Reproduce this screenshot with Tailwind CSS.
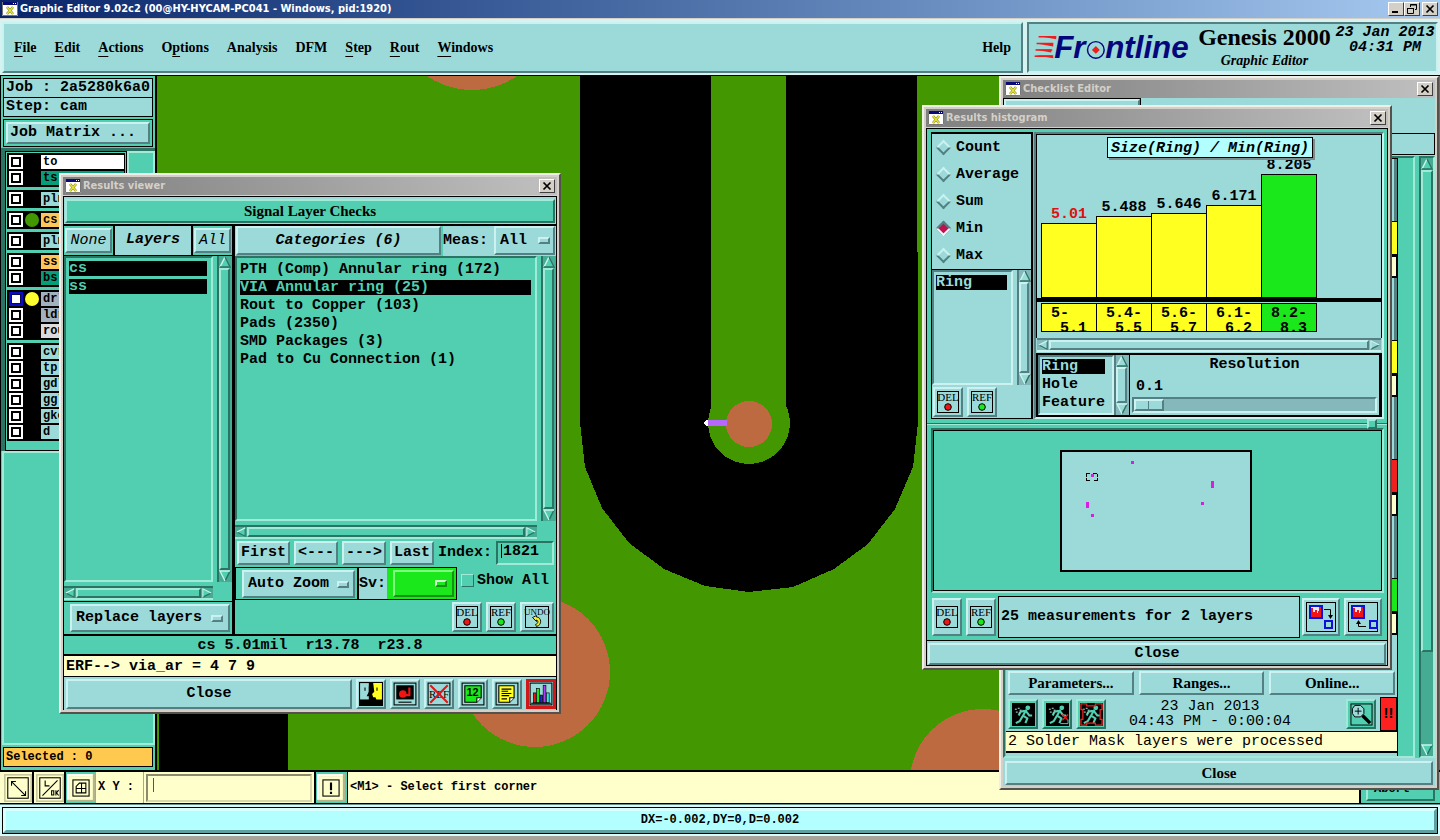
<!DOCTYPE html>
<html lang="en">
<head>
  <meta charset="UTF-8" />
  <meta name="viewport" content="width=device-width, initial-scale=1" />
  <title>Graphic Editor 9.02c2</title>
  <script src="https://cdn.jsdelivr.net/npm/@tailwindcss/browser@4"></script>
</head>
<body class="relative h-screen overflow-hidden flex flex-col bg-[#52ceb0] text-black text-[15px] leading-[18px] font-bold font-['Liberation_Mono',monospace]">

  <!-- Shared icons -->
  <svg class="hidden">
    <symbol id="xwin" viewBox="0 0 16 14">
      <rect width="16" height="14" fill="#fff" />
      <rect width="16" height="3" fill="#0a0a78" />
      <path d="M11 1.5h1M13 1.5h1" stroke="#fff" />
      <path d="M5 5l6 7M11 5l-6 7" stroke="#8a8a10" stroke-width="2.6" />
      <path d="M5 5l6 7M11 5l-6 7" stroke="#e8e840" stroke-width="1.2" />
      <path d="M.5 0v13.500h15V0" fill="none" stroke="#777" />
    </symbol>
    <symbol id="close" viewBox="0 0 14 12">
      <path d="M3.500 2.500l7 7M10.500 2.500l-7 7" stroke="#000" stroke-width="1.7" />
    </symbol>
    <symbol id="up" viewBox="0 0 12 12">
      <path d="M6 1L11 11H1z" fill="currentColor" />
      <path d="M1 11L6 1" stroke="#c8f5ee" stroke-width="1.500" />
      <path d="M6 1l5 10H1" fill="none" stroke="#2b7362" stroke-width="1.300" />
    </symbol>
    <symbol id="down" viewBox="0 0 12 12">
      <path d="M1 1h10L6 11z" fill="currentColor" />
      <path d="M11 1L6 11" stroke="#2b7362" stroke-width="1.500" />
      <path d="M6 11L1 1h10" fill="none" stroke="#c8f5ee" stroke-width="1.300" />
    </symbol>
    <symbol id="left" viewBox="0 0 12 12">
      <path d="M1 6L11 1v10z" fill="currentColor" />
      <path d="M11 1v10L1 6" fill="none" stroke="#2b7362" stroke-width="1.300" />
      <path d="M1 6l10-5" stroke="#c8f5ee" stroke-width="1.500" />
    </symbol>
    <symbol id="right" viewBox="0 0 12 12">
      <path d="M1 1l10 5L1 11z" fill="currentColor" />
      <path d="M11 6L1 11" stroke="#2b7362" stroke-width="1.500" />
      <path d="M1 11V1l10 5" fill="none" stroke="#c8f5ee" stroke-width="1.300" />
    </symbol>
    <symbol id="del" viewBox="0 0 24 24">
      <rect x="1.500" y="1.500" width="21" height="21" fill="none" stroke="#000" />
      <text x="12" y="10.500" text-anchor="middle" font-family="Liberation Serif" font-size="11" font-weight="400">DEL</text>
      <circle cx="12" cy="17" r="3.300" fill="#f01414" stroke="#000" />
    </symbol>
    <symbol id="ref" viewBox="0 0 24 24">
      <rect x="1.500" y="1.500" width="21" height="21" fill="none" stroke="#000" />
      <text x="12" y="10.500" text-anchor="middle" font-family="Liberation Serif" font-size="11" font-weight="400">REF</text>
      <circle cx="12" cy="17" r="3.300" fill="#1be81b" stroke="#000" />
    </symbol>
    <symbol id="runner" viewBox="0 0 24 24">
      <circle cx="16.500" cy="5" r="2.500" fill="#52ceb0" />
      <path d="M15 7l-4 7M11 8l4 1 3 4h3M14 8l-5 1-2 4M11 13l5 3-2 5M11 14l-3 5-4 2" fill="none" stroke="#52ceb0" stroke-width="2.200" />
      <path d="M3 6.500h2M6 5.500h2M4 9.500h2M8 7.500h2M7 10.500h1" stroke="#b8efe2" />
    </symbol>
  </svg>

  <!-- Main title bar -->
  <header class="h-[18px] shrink-0 flex items-center gap-[2px] pl-[2px] pr-[2px] bg-linear-to-r from-[#0a246a] to-[#a6caf0] text-white text-[11px] font-['DejaVu_Sans_Condensed','DejaVu_Sans',sans-serif]">
    <svg class="w-4 h-[14px]"><use href="#xwin" /></svg>
    <h1 class="flex-1">Graphic Editor 9.02c2 (00@HY-HYCAM-PC041 - Windows, pid:1920)</h1>
    <button aria-label="Minimize" class="w-4 h-[14px] bg-[#d4d0c8] border [border-color:#fff_#404040_#404040_#fff]"><svg viewBox="0 0 14 12" class="block"><path d="M3 9h6" stroke="#000" stroke-width="2" /></svg></button>
    <button aria-label="Restore" class="w-4 h-[14px] -ml-[2px] bg-[#d4d0c8] border [border-color:#fff_#404040_#404040_#fff]"><svg viewBox="0 0 14 12" class="block"><path d="M5.500 4V1.500h6v5H10M5 2h7M2.500 5.500h6v5h-6zM2 5.500h7" fill="none" stroke="#000" /></svg></button>
    <button aria-label="Close" class="w-4 h-[14px] bg-[#d4d0c8] border [border-color:#fff_#404040_#404040_#fff]"><svg viewBox="0 0 14 12" class="block"><use href="#close" /></svg></button>
  </header>

  <div class="h-[58px] shrink-0 flex gap-1 pt-[3px] pb-[2px] px-[2px] bg-[#d5f3f1] border-t border-[#d4d0c8] border-b border-b-black">
    <nav class="flex-1 flex items-center px-[10px] gap-[18px] bg-[#9cdada] border-2 [border-color:#cbf1f1_#548083_#548083_#cbf1f1] text-[14px] font-['Liberation_Serif',serif]">
      <a href="#"><u class="underline-offset-4">F</u>ile</a>
      <a href="#"><u class="underline-offset-4">E</u>dit</a>
      <a href="#"><u class="underline-offset-4">A</u>ctions</a>
      <a href="#">O<u class="underline-offset-4">p</u>tions</a>
      <a href="#">Analysis</a>
      <a href="#">DFM</a>
      <a href="#"><u class="underline-offset-4">S</u>tep</a>
      <a href="#"><u class="underline-offset-4">R</u>out</a>
      <a href="#"><u class="underline-offset-4">W</u>indows</a>
      <a href="#" class="ml-auto">Help</a>
    </nav>
    <div class="w-[411px] shrink-0 flex bg-[#9cdada] border-2 [border-color:#548083_#cbf1f1_#cbf1f1_#548083]">
      <svg class="w-[166px] h-full shrink-0" viewBox="1029 23 166 48">
        <path d="M1038 35.500h17v3zM1035 43h17v3zM1033 49h17v3zM1033 55h19v3z" fill="#f01c1c" />
        <path d="M1037 36h18M1035 43h17M1034 49.500h17M1033 56h18" stroke="#f01c1c" stroke-width="1.500" />
        <g fill="#06067c" font-family="Liberation Sans" font-size="32" font-weight="700" font-style="italic">
          <text x="1053" y="58">Fr</text>
          <text x="1105" y="58">ntline</text>
        </g>
        <circle cx="1095.500" cy="49.500" r="8.500" fill="none" stroke="#06067c" stroke-width="1.500" />
        <path d="M1095.500 45.500l4 4-4 4-4-4z" fill="#f01c1c" />
      </svg>
      <div class="flex-1 text-center font-['Liberation_Serif',serif]">
        <div class="text-[24px] leading-[26px] whitespace-nowrap">Genesis 2000</div>
        <div class="text-[14px] leading-[22px] italic">Graphic Editor</div>
      </div>
      <div class="w-[102px] shrink-0 text-center italic leading-[15px] pt-px">23 Jan 2013<br />04:31 PM</div>
    </div>
  </div>

  <main class="flex-1 min-h-0 flex">
    <!-- Layer panel -->
    <aside class="w-[157px] shrink-0 flex flex-col border-r-2 border-black bg-[#52ceb0] border-l border-l-black">
      <div class="flex flex-col px-[2px] pt-[2px]">
        <div class="h-[20px] border border-black bg-[#9cdada] px-[2px] whitespace-nowrap">Job : 2a5280k6a0</div>
        <div class="h-[19px] border border-t-0 border-black bg-[#9cdada] px-[2px]">Step: cam</div>
        <div class="mt-[2px] h-[28px] border border-black p-[2px]">
          <button class="block w-full h-[22px] text-left leading-[16px] px-[2px] bg-[#9cdada] border-2 [border-color:#cbf1f1_#548083_#548083_#cbf1f1]">Job Matrix ...</button>
        </div>
      </div>
      <div class="mt-px h-[303px] flex pt-[3px] pl-1 bg-[#2b7362]">
        <div class="w-[122px] h-full flex flex-col gap-[3px] p-px bg-[#52ceb0] border border-black text-[12px] leading-[14px]">
          <div class="bg-black py-px pl-[2px]">
            <label class="flex items-center h-4"><input type="checkbox" class="appearance-none w-[14px] h-[14px] bg-white border-2 border-white outline-2 outline-black -outline-offset-4" /><span class="w-[18px]"></span><span class="flex-1 h-[14px] mr-px bg-white pl-[2px]">to</span></label>
            <label class="flex items-center h-4"><input type="checkbox" class="appearance-none w-[14px] h-[14px] bg-white border-2 border-white outline-2 outline-black -outline-offset-4" /><span class="w-[18px]"></span><span class="flex-1 h-[14px] mr-px bg-[#079d78] pl-[2px]">ts</span></label>
          </div>
          <div class="bg-black py-px pl-[2px]">
            <label class="flex items-center h-4"><input type="checkbox" class="appearance-none w-[14px] h-[14px] bg-white border-2 border-white outline-2 outline-black -outline-offset-4" /><span class="w-[18px]"></span><span class="flex-1 h-[14px] mr-px bg-[#9cdada] pl-[2px]">pln</span></label>
          </div>
          <div class="bg-black py-px pl-[2px]">
            <label class="flex items-center h-4"><input type="checkbox" class="appearance-none w-[14px] h-[14px] bg-white border-2 border-white outline-2 outline-black -outline-offset-4" /><span class="w-[14px] h-[14px] mx-[2px] rounded-full bg-[#439700]"></span><span class="flex-1 h-[14px] mr-px bg-[#ffc65a] pl-[2px]">cs</span></label>
          </div>
          <div class="bg-black py-px pl-[2px]">
            <label class="flex items-center h-4"><input type="checkbox" class="appearance-none w-[14px] h-[14px] bg-white border-2 border-white outline-2 outline-black -outline-offset-4" /><span class="w-[18px]"></span><span class="flex-1 h-[14px] mr-px bg-[#9cdada] pl-[2px]">pln</span></label>
          </div>
          <div class="bg-black py-px pl-[2px]">
            <label class="flex items-center h-4"><input type="checkbox" class="appearance-none w-[14px] h-[14px] bg-white border-2 border-white outline-2 outline-black -outline-offset-4" /><span class="w-[18px]"></span><span class="flex-1 h-[14px] mr-px bg-[#ffc65a] pl-[2px]">ss</span></label>
            <label class="flex items-center h-4"><input type="checkbox" class="appearance-none w-[14px] h-[14px] bg-white border-2 border-white outline-2 outline-black -outline-offset-4" /><span class="w-[18px]"></span><span class="flex-1 h-[14px] mr-px bg-[#079d78] pl-[2px]">bs</span></label>
          </div>
          <div class="bg-black py-px pl-[2px]">
            <label class="flex items-center h-4"><input type="checkbox" checked class="appearance-none w-[14px] h-[14px] bg-white border-3 border-[#0a0ac8] outline-1 outline-[#0a0a50] -outline-offset-3" /><span class="w-[14px] h-[14px] mx-[2px] rounded-full bg-[#ffff30]"></span><span class="flex-1 h-[14px] mr-px bg-[#a3b2bf] pl-[2px]">drl</span></label>
            <label class="flex items-center h-4"><input type="checkbox" class="appearance-none w-[14px] h-[14px] bg-white border-2 border-white outline-2 outline-black -outline-offset-4" /><span class="w-[18px]"></span><span class="flex-1 h-[14px] mr-px bg-[#a3b2bf] pl-[2px]">ldr</span></label>
            <label class="flex items-center h-4"><input type="checkbox" class="appearance-none w-[14px] h-[14px] bg-white border-2 border-white outline-2 outline-black -outline-offset-4" /><span class="w-[18px]"></span><span class="flex-1 h-[14px] mr-px bg-[#dcdcdc] pl-[2px]">rout</span></label>
          </div>
          <div class="bg-black py-px pl-[2px]">
            <label class="flex items-center h-4"><input type="checkbox" class="appearance-none w-[14px] h-[14px] bg-white border-2 border-white outline-2 outline-black -outline-offset-4" /><span class="w-[18px]"></span><span class="flex-1 h-[14px] mr-px bg-[#9cdada] pl-[2px]">cvr</span></label>
            <label class="flex items-center h-4"><input type="checkbox" class="appearance-none w-[14px] h-[14px] bg-white border-2 border-white outline-2 outline-black -outline-offset-4" /><span class="w-[18px]"></span><span class="flex-1 h-[14px] mr-px bg-[#9cdada] pl-[2px]">tp</span></label>
            <label class="flex items-center h-4"><input type="checkbox" class="appearance-none w-[14px] h-[14px] bg-white border-2 border-white outline-2 outline-black -outline-offset-4" /><span class="w-[18px]"></span><span class="flex-1 h-[14px] mr-px bg-[#9cdada] pl-[2px]">gdl</span></label>
            <label class="flex items-center h-4"><input type="checkbox" class="appearance-none w-[14px] h-[14px] bg-white border-2 border-white outline-2 outline-black -outline-offset-4" /><span class="w-[18px]"></span><span class="flex-1 h-[14px] mr-px bg-[#9cdada] pl-[2px]">ggl</span></label>
            <label class="flex items-center h-4"><input type="checkbox" class="appearance-none w-[14px] h-[14px] bg-white border-2 border-white outline-2 outline-black -outline-offset-4" /><span class="w-[18px]"></span><span class="flex-1 h-[14px] mr-px bg-[#9cdada] pl-[2px]">gko</span></label>
            <label class="flex items-center h-4"><input type="checkbox" class="appearance-none w-[14px] h-[14px] bg-white border-2 border-white outline-2 outline-black -outline-offset-4" /><span class="w-[18px]"></span><span class="flex-1 h-[14px] mr-px bg-[#9cdada] pl-[2px]">d</span></label>
          </div>
        </div>
        <div class="flex-1 bg-[#52ceb0] border-x-2 border-t-2 border-[#a2ead8]"></div>
      </div>
      <div class="flex-1 ml-px border-2 border-[#a2ead8]"></div>
      <div class="mx-[2px] mt-[2px] mb-[3px] h-[20px] border border-black bg-[#ffc84e] px-[2px] text-[12px]">Selected : 0</div>
    </aside>

    <!-- Board view -->
    <svg class="flex-1 min-w-0 h-full" viewBox="157 76 1283 694" preserveAspectRatio="xMinYMin slice" shape-rendering="crispEdges">
      <rect x="157" y="76" width="1283" height="694" fill="#439700" />
      <path d="M580 76H917L918 423 913 467 895 509 868 544 834 569 793 587 749 592 705 586 664 569 629 543 602 508 585 467 580 423z" fill="#000" />
      <rect x="711" y="76" width="75" height="340" fill="#439700" />
      <circle cx="749" cy="423" r="41" fill="#439700" />
      <circle cx="749" cy="424" r="23" fill="#bd6a40" />
      <path d="M704 423l2-3h5v6h-5z" fill="#fff" />
      <rect x="708" y="420" width="19" height="6" fill="#b766ff" />
      <circle cx="472" cy="11" r="79" fill="#bd6a40" />
      <circle cx="535" cy="672" r="75" fill="#bd6a40" />
      <circle cx="983" cy="782" r="73" fill="#bd6a40" />
      <rect x="159" y="700" width="129" height="70" fill="#000" />
    </svg>
  </main>

  <!-- Command row -->
  <div class="h-[34px] shrink-0 flex items-stretch border-t-2 border-b border-black bg-[#ffffcc] text-[12px]">
    <button aria-label="Zoom area" class="w-8 ml-[2px] p-[2px] bg-[#ffffcc] border-r-2 border-black">
      <svg viewBox="0 0 26 26" class="w-[28px] h-[28px]" fill="none" stroke="#000"><rect x=".5" y=".5" width="25" height="25" stroke="#c8c8a0" stroke-width="2" /><rect x="3.500" y="3.500" width="19" height="19" /><path d="M7 7l13 13M7 11V7h4M16 20h4v-4" /></svg>
    </button>
    <button aria-label="Snap" class="w-8 p-[2px] bg-[#ffffcc] border-r-2 border-black">
      <svg viewBox="0 0 26 26" class="w-[28px] h-[28px]" fill="none" stroke="#000"><rect x=".5" y=".5" width="25" height="25" stroke="#c8c8a0" stroke-width="2" /><rect x="3.500" y="3.500" width="19" height="19" /><path d="M6 20L20 6M8.500 6v5h4" /><path d="M14.500 15.500h2v4h-2zM18.500 15v5M21 15l-2 2.500 2 2.500" /></svg>
    </button>
    <button aria-label="Grid" class="w-[30px] p-px bg-[#52ceb0]">
      <svg viewBox="0 0 26 26" class="w-[28px] h-[28px]" fill="none" stroke="#000"><rect x="1" y="1" width="24" height="24" fill="#ffffcc" stroke="#b4b48c" stroke-width="2" /><path d="M1 24V1h23" stroke="#fffff0" stroke-width="2" /><rect x="5.500" y="5.500" width="15" height="15" /><path d="M13.500 8v10M8 13.500h10M8.500 17.500h9v-9h-6l-3 3z" /></svg>
    </button>
    <label for="xy" class="w-[47px] pl-[2px] leading-[30px] text-[12px] whitespace-nowrap">X Y :</label>
    <div class="w-[173px] border-l border-r-2 border-[#52ceb0] border-r-black p-[2px]">
      <input id="xy" type="text" value="" class="block w-full h-[28px] bg-[#ffffcc] px-1 border-2 [border-color:#8c8c6c_#d8d8b0_#d8d8b0_#8c8c6c] bg-[linear-gradient(#555,#555)] bg-[length:1px_14px] bg-no-repeat bg-[position:5px_2px]" />
    </div>
    <button aria-label="Interrupt" class="w-[32px] p-px bg-[#52ceb0] border-r border-black">
      <svg viewBox="0 0 26 26" class="w-[28px] h-[28px]" fill="none" stroke="#000"><rect x="1" y="1" width="24" height="24" fill="#ffffcc" stroke="#b4b48c" stroke-width="2" /><path d="M1 24V1h23" stroke="#fffff0" stroke-width="2" /><rect x="5.500" y="5.500" width="15" height="15" /><path d="M13 8v7M13 16.500v2" stroke-width="2" /></svg>
    </button>
    <div class="flex-1 pl-[2px] leading-[30px]">&lt;M1&gt; - Select first corner</div>
    <div class="w-[81px] border-l-2 border-black bg-[#52ceb0] p-[5px] pb-[2px]">
      <button class="w-full h-[24px] leading-[20px] text-left pl-[6px] border-2 [border-color:#a2ead8_#2b7362_#2b7362_#a2ead8]">Abort</button>
    </div>
  </div>

  <footer class="h-9 shrink-0 px-[2px] pt-[2px] pb-[2px] bg-[#d5fbfb] border-t-1 border-[#6b8f8f] border-b-4 border-b-[#a8a49c] text-[12px]">
    <div class="h-[27px] border border-black">
      <div class="h-[25px] leading-[19px] text-center bg-[#b3ffff] border-3 [border-color:#d9ffff_#60a0a0_#60a0a0_#d9ffff]">DX=-0.002,DY=0,D=0.002</div>
    </div>
  </footer>

  <!-- Checklist Editor -->
  <section class="absolute left-[999px] top-[76px] w-[440px] h-[714px] flex flex-col bg-[#d4d0c8] border-2 [border-color:#f0eee8_#55524e_#55524e_#f0eee8] p-[2px]">
    <div class="h-[18px] shrink-0 flex items-center gap-[2px] px-[2px] bg-linear-to-r from-[#808080] to-[#c0c0c0] text-[#d4d0c8] text-[11px] font-['DejaVu_Sans_Condensed','DejaVu_Sans',sans-serif]">
      <svg class="w-4 h-[14px]"><use href="#xwin" /></svg>
      <h2 class="flex-1">Checklist Editor</h2>
      <button aria-label="Close" class="w-4 h-[14px] bg-[#d4d0c8] border [border-color:#fff_#404040_#404040_#fff]"><svg viewBox="0 0 14 12" class="block"><use href="#close" /></svg></button>
    </div>
    <div class="flex-1 min-h-0 flex flex-col bg-[#9cdada]">
      <div class="h-[35px]"><div class="w-[138px] h-[30px] border border-black"><div class="h-full border-2 [border-color:#cbf1f1_#548083_#548083_#cbf1f1]"></div></div></div>
      <div class="h-[22px] mb-px border border-black"></div>
      <div class="flex-1 min-h-0 flex bg-[#52ceb0]">
        <div class="flex-1 flex pl-px border-2 [border-color:#2b7362_#a2ead8_#a2ead8_#2b7362]">
          <div class="w-[392px] flex flex-col border-r border-t border-black bg-[#9cdada]">
            <div class="h-[62px] border-r-3 border-[#548083]"></div>
            <div class="h-[34px] border-y border-black bg-[#ffff20]"></div>
            <div class="h-[23px] border-y-2 border-r border-black bg-[#ffffcc]"></div>
            <div class="h-[62px] border-r-3 border-[#548083]"></div>
            <div class="h-[34px] border-y border-black bg-[#ffff20]"></div>
            <div class="h-[23px] border-y-2 border-r border-black bg-[#ffffcc]"></div>
            <div class="h-[62px] border-r-3 border-[#548083]"></div>
            <div class="h-[34px] border-y border-black bg-[#f02020]"></div>
            <div class="h-[23px] border-y-2 border-r border-black bg-[#ffffcc]"></div>
            <div class="h-[62px] border-r-3 border-[#548083]"></div>
            <div class="h-[34px] border-y border-black bg-[#1be81b]"></div>
            <div class="h-[23px] border-y-2 border-r border-black bg-[#ffffcc]"></div>
            <div class="h-[62px] flex items-end gap-[5px] px-[2px] pb-[2px] text-[15px] font-['Liberation_Serif',serif]">
              <button class="flex-1 h-6 leading-[20px] border-2 [border-color:#cbf1f1_#548083_#548083_#cbf1f1]">Parameters...</button>
              <button class="flex-1 h-6 leading-[20px] border-2 [border-color:#cbf1f1_#548083_#548083_#cbf1f1]">Ranges...</button>
              <button class="flex-1 h-6 leading-[20px] border-2 [border-color:#cbf1f1_#548083_#548083_#cbf1f1]">Online...</button>
            </div>
            <div class="h-[34px] flex items-center pl-[2px] gap-1 font-normal">
              <button aria-label="Run" class="w-[30px] h-[30px] flex items-center justify-center bg-[#52ceb0] border-2 [border-color:#a2ead8_#2b7362_#2b7362_#a2ead8]"><svg viewBox="0 0 24 24" class="w-[23px] h-[23px]"><rect width="24" height="24" /><use href="#runner" /></svg></button>
              <button aria-label="Run on feature" class="w-[30px] h-[30px] flex items-center justify-center bg-[#52ceb0] border-2 [border-color:#a2ead8_#2b7362_#2b7362_#a2ead8]"><svg viewBox="0 0 24 24" class="w-[23px] h-[23px]"><rect width="24" height="24" /><use href="#runner" /><path d="M17 12l6 6M23 12l-6 6" stroke="#e02020" stroke-width="1.500" /><path d="M15 21.500h8v-4" fill="none" stroke="#52ceb0" /></svg></button>
              <button aria-label="Run in profile" class="w-[30px] h-[30px] flex items-center justify-center bg-[#52ceb0] border-2 [border-color:#a2ead8_#2b7362_#2b7362_#a2ead8]"><svg viewBox="0 0 24 24" class="w-[23px] h-[23px]"><rect width="24" height="24" /><use href="#runner" /><path d="M1 1h6v2h9V1h7v6h-2v10h2v6h-7v-2H7v2H1v-6h2V7H1z" fill="none" stroke="#f02020" stroke-width="1.300" /></svg></button>
              <div class="flex-1 pr-8 text-center leading-[15px] whitespace-nowrap">23 Jan 2013<br />04:43 PM - 0:00:04</div>
              <button aria-label="Inspect" class="w-[30px] h-[30px] flex items-center justify-center bg-[#52ceb0] border-2 [border-color:#a2ead8_#2b7362_#2b7362_#a2ead8]"><svg viewBox="0 0 24 24" class="w-[23px] h-[23px]" fill="none" stroke="#000"><rect x="1" y="1" width="22" height="22" /><path d="M5 2.500h6l3.500 3.500v5L11 14.500H5L2.500 11V6z" fill="#9cdada" /><path d="M8.500 5v7M5 8.500h7" /><path d="M13 13l8 8" stroke-width="3.500" /></svg></button>
              <div class="w-[17px] h-full text-center leading-[30px] bg-[#ff2020] border border-black font-['Liberation_Sans',sans-serif] font-bold">!!</div>
            </div>
            <div class="h-[22px] shrink-0 pl-[2px] leading-[20px] bg-[#ffffcc] border-t border-b-2 border-black font-normal">2 Solder Mask layers were processed</div>
          </div>
        </div>
        <div class="w-4 ml-1 flex flex-col bg-[#46ab93] border-2 [border-color:#2b7362_#a2ead8_#a2ead8_#2b7362] text-[#52ceb0]">
          <svg class="w-3 h-3 shrink-0"><use href="#up" /></svg>
          <div class="h-[482px] bg-[#52ceb0] border-2 [border-color:#a2ead8_#2b7362_#2b7362_#a2ead8]"></div>
          <svg class="w-3 h-3 shrink-0 mt-auto"><use href="#down" /></svg>
        </div>
      </div>
      <button class="mx-[2px] mt-[3px] mb-px h-6 leading-[20px] text-[15px] font-['Liberation_Serif',serif] border-2 [border-color:#cbf1f1_#548083_#548083_#cbf1f1]">Close</button>
    </div>
  </section>

  <!-- Results histogram -->
  <section class="absolute left-[922px] top-[105px] w-[470px] h-[565px] flex flex-col bg-[#d4d0c8] border-2 [border-color:#f0eee8_#55524e_#55524e_#f0eee8] p-[2px]">
    <div class="h-[18px] shrink-0 flex items-center gap-[2px] px-[2px] bg-linear-to-r from-[#808080] to-[#c0c0c0] text-[#d4d0c8] text-[11px] font-['DejaVu_Sans_Condensed','DejaVu_Sans',sans-serif]">
      <svg class="w-4 h-[14px]"><use href="#xwin" /></svg>
      <h2 class="flex-1">Results histogram</h2>
      <button aria-label="Close" class="w-4 h-[14px] bg-[#d4d0c8] border [border-color:#fff_#404040_#404040_#fff]"><svg viewBox="0 0 14 12" class="block"><use href="#close" /></svg></button>
    </div>
    <div class="mt-px flex-1 min-h-0 flex flex-col bg-[#52ceb0] border border-black">
      <div class="h-[291px] flex gap-px pt-[3px] pl-1 pr-[3px] pb-px">
        <div class="w-[102px] flex flex-col bg-[#9cdada] border border-t-2 border-r-2 border-black">
          <div class="h-[136px] flex flex-col justify-around pl-[6px] border-b border-black">
            <label class="flex items-center gap-[7px]"><input type="radio" name="stat" class="appearance-none w-[11px] h-[11px] rotate-45 border-2 [border-color:#cbf1f1_#548083_#548083_#cbf1f1]" />Count</label>
            <label class="flex items-center gap-[7px]"><input type="radio" name="stat" class="appearance-none w-[11px] h-[11px] rotate-45 border-2 [border-color:#cbf1f1_#548083_#548083_#cbf1f1]" />Average</label>
            <label class="flex items-center gap-[7px]"><input type="radio" name="stat" class="appearance-none w-[11px] h-[11px] rotate-45 border-2 [border-color:#cbf1f1_#548083_#548083_#cbf1f1]" />Sum</label>
            <label class="flex items-center gap-[7px]"><input type="radio" name="stat" checked class="appearance-none w-[11px] h-[11px] rotate-45 bg-[#c1124f] border-2 [border-color:#548083_#e8fafa_#e8fafa_#548083]" />Min</label>
            <label class="flex items-center gap-[7px]"><input type="radio" name="stat" class="appearance-none w-[11px] h-[11px] rotate-45 border-2 [border-color:#cbf1f1_#548083_#548083_#cbf1f1]" />Max</label>
          </div>
          <div class="h-[115px] flex gap-1">
            <ul class="flex-1 p-[3px] pl-[2px] pr-[4px] border-2 [border-color:#548083_#cbf1f1_#cbf1f1_#548083]">
              <li class="h-[15px] leading-[15px] bg-black text-[#9cdada]">Ring</li>
            </ul>
            <div class="w-[14px] flex flex-col bg-[#84b8ba] border-l-2 border-[#548083] text-[#9cdada]">
              <svg class="w-3 h-3 shrink-0"><use href="#up" /></svg>
              <div class="flex-1 mr-[2px] bg-[#9cdada] border-2 [border-color:#cbf1f1_#548083_#548083_#cbf1f1]"></div>
              <svg class="w-3 h-3 shrink-0"><use href="#down" /></svg>
            </div>
          </div>
          <div class="flex gap-1 pt-[2px] pl-px">
            <button aria-label="Delete" class="w-[30px] h-[30px] flex items-center justify-center border-2 [border-color:#cbf1f1_#548083_#548083_#cbf1f1]"><svg class="w-6 h-6 shrink-0"><use href="#del" /></svg></button>
            <button aria-label="Reference" class="w-[30px] h-[30px] flex items-center justify-center border-2 [border-color:#cbf1f1_#548083_#548083_#cbf1f1]"><svg class="w-6 h-6 shrink-0"><use href="#ref" /></svg></button>
          </div>
        </div>
        <div class="flex-1 flex flex-col bg-[#9cdada] border-2 [border-color:#548083_#cbf1f1_#cbf1f1_#548083]">
          <!-- Histogram -->
          <div class="h-[205px] flex flex-col border border-b-0 border-black">
            <div class="relative h-[163px] flex items-end pl-1 leading-[16px]">
              <div class="absolute left-[70px] top-[2px] px-[3px] pt-[2px] h-[21px] leading-[18px] bg-[#b3ffff] border border-black shadow-[2px_2px_0_#7c8c8c] italic whitespace-nowrap">Size(Ring) / Min(Ring)</div>
              <div class="w-14 text-center text-[#e01010]">5.01<div class="bg-[#ffff20] border border-black" style="height:75px"></div></div>
              <div class="w-14 -ml-px text-center">5.488<div class="bg-[#ffff20] border border-black" style="height:82px"></div></div>
              <div class="w-14 -ml-px text-center">5.646<div class="bg-[#ffff20] border border-black" style="height:85px"></div></div>
              <div class="w-14 -ml-px text-center">6.171<div class="bg-[#ffff20] border border-black" style="height:93px"></div></div>
              <div class="w-14 -ml-px text-center">8.205<div class="bg-[#1be81b] border border-black" style="height:124px"></div></div>
            </div>
            <div class="h-1 bg-black"></div>
            <div class="flex pl-1 mt-px leading-[15px] whitespace-pre">
              <div class="w-14 h-[29px] pl-[9px] pt-[2px] bg-[#ffff20] border border-black">5-<br /> 5.1</div>
              <div class="w-14 h-[29px] -ml-px pl-[9px] pt-[2px] bg-[#ffff20] border border-black">5.4-<br /> 5.5</div>
              <div class="w-14 h-[29px] -ml-px pl-[9px] pt-[2px] bg-[#ffff20] border border-black">5.6-<br /> 5.7</div>
              <div class="w-14 h-[29px] -ml-px pl-[9px] pt-[2px] bg-[#ffff20] border border-black">6.1-<br /> 6.2</div>
              <div class="w-14 h-[29px] -ml-px pl-[9px] pt-[2px] bg-[#1be81b] border border-black">8.2-<br /> 8.3</div>
            </div>
          </div>
          <div class="h-[14px] mx-px mb-px flex bg-[#84b8ba] border-y-2 [border-color:#548083_#cbf1f1_#cbf1f1_#548083] text-[#9cdada]">
            <svg class="w-3 h-[10px] shrink-0"><use href="#left" /></svg>
            <div class="flex-1 bg-[#9cdada] border-2 [border-color:#cbf1f1_#548083_#548083_#cbf1f1]"></div>
            <svg class="w-3 h-[10px] shrink-0"><use href="#right" /></svg>
          </div>
          <div class="flex-1 flex border-2 border-r-3 border-black">
            <ul class="w-[76px] px-[2px] pt-[2px] border-2 [border-color:#548083_#cbf1f1_#cbf1f1_#548083]">
              <li class="h-[18px]"><span class="block w-[63px] h-[15px] leading-[15px] bg-black text-[#9cdada]">Ring</span></li>
              <li class="leading-[16px] h-[18px]">Hole</li>
              <li class="leading-[16px] h-[18px]">Feature</li>
            </ul>
            <div class="w-[15px] flex flex-col bg-[#84b8ba] border-l-2 border-[#548083] text-[#9cdada]">
              <svg class="w-3 h-3 shrink-0"><use href="#up" /></svg>
              <div class="flex-1 mr-[2px] bg-[#9cdada] border-2 [border-color:#cbf1f1_#548083_#548083_#cbf1f1]"></div>
              <svg class="w-3 h-3 shrink-0"><use href="#down" /></svg>
            </div>
            <div class="flex-1 flex flex-col border-l border-black">
              <label for="res" class="pt-px text-center">Resolution</label>
              <output for="res" class="pl-[6px] mt-1">0.1</output>
              <input id="res" type="range" min="0" max="100" value="0" class="appearance-none mt-px mx-[2px] h-4 bg-[#84b8ba] border-2 [border-color:#548083_#cbf1f1_#cbf1f1_#548083] [&::-webkit-slider-thumb]:appearance-none [&::-webkit-slider-thumb]:w-[30px] [&::-webkit-slider-thumb]:h-[12px] [&::-webkit-slider-thumb]:border-2 [&::-webkit-slider-thumb]:border-solid [&::-webkit-slider-thumb]:[border-color:#cbf1f1_#548083_#548083_#cbf1f1] [&::-webkit-slider-thumb]:bg-[linear-gradient(90deg,#9cdada_12px,#548083_12px,#548083_13px,#9cdada_13px)]" />
            </div>
          </div>
        </div>
      </div>
      <div class="relative h-[8px]">
        <div class="mt-[3px] h-[2px] bg-[#2b7362] border-b border-[#a2ead8]"></div>
        <div class="absolute right-[10px] -top-[1px] w-[10px] h-[10px] bg-[#52ceb0] border-2 [border-color:#a2ead8_#2b7362_#2b7362_#a2ead8]"></div>
      </div>
      <!-- Board overview -->
      <div class="ml-1 mr-[3px] h-[165px] border-2 [border-color:#2b7362_#a2ead8_#a2ead8_#2b7362]">
        <svg class="block w-full h-full border border-black" viewBox="933 431 450 159" shape-rendering="crispEdges">
          <rect x="1061" y="451" width="191" height="120" fill="#9cdada" stroke="#000" stroke-width="2" />
          <g fill="#d81ee0">
            <rect x="1131" y="461" width="3" height="3" />
            <rect x="1091" y="474" width="3" height="3" />
            <rect x="1212" y="481" width="3" height="7" />
            <rect x="1086" y="502" width="3" height="6" />
            <rect x="1202" y="502" width="3" height="3" />
            <rect x="1091" y="514" width="3" height="3" />
          </g>
          <path d="M1086.500 477v-3.500h4M1093 473.500h4.500v3M1097.500 478v2.500h-3M1090 480.500h-3.500v-3" fill="none" stroke="#000" />
        </svg>
      </div>
      <div class="h-[47px] flex items-center gap-1 px-[5px]">
        <button aria-label="Delete" class="w-[30px] h-[38px] flex items-center justify-center bg-[#9cdada] border-2 [border-color:#cbf1f1_#548083_#548083_#cbf1f1]"><svg class="w-6 h-6 shrink-0"><use href="#del" /></svg></button>
        <button aria-label="Reference" class="w-[30px] h-[38px] flex items-center justify-center bg-[#9cdada] border-2 [border-color:#cbf1f1_#548083_#548083_#cbf1f1]"><svg class="w-6 h-6 shrink-0"><use href="#ref" /></svg></button>
        <div class="flex-1 h-[42px] -ml-[2px] -mr-[2px] leading-[40px] pl-[2px] bg-[#9cdada] border border-black">25 measurements for 2 layers</div>
        <button aria-label="Copy to view" class="w-[38px] h-[38px] flex items-center justify-center bg-[#9cdada] border-2 [border-color:#cbf1f1_#548083_#548083_#cbf1f1]">
          <svg viewBox="0 0 30 30" class="w-[30px] h-[30px] shrink-0" fill="none"><rect x=".5" y=".5" width="29" height="29" stroke="#000" /><rect x="4" y="4" width="12" height="12" fill="#e8e8f8" stroke="#1010d8" stroke-width="2" /><path d="M5 15V6h2v4h2V8h2v3h1V9h1V5h2v10z" fill="#f01414" /><path d="M18 7.500h6.500V15" stroke="#000" /><path d="M22 13h5l-2.500 4z" fill="#000" /><rect x="19" y="19" width="7" height="7" stroke="#1010d8" stroke-width="2" /></svg>
        </button>
        <button aria-label="Copy from view" class="w-[38px] h-[38px] flex items-center justify-center bg-[#9cdada] border-2 [border-color:#cbf1f1_#548083_#548083_#cbf1f1]">
          <svg viewBox="0 0 30 30" class="w-[30px] h-[30px] shrink-0" fill="none"><rect x=".5" y=".5" width="29" height="29" stroke="#000" /><rect x="4" y="4" width="12" height="12" fill="#e8e8f8" stroke="#1010d8" stroke-width="2" /><path d="M5 15V6h2v4h2V8h2v3h1V9h1V5h2v10z" fill="#f01414" /><path d="M18 24.500H10.500V21" stroke="#000" /><path d="M8 22h5l-2.500-4z" fill="#000" /><rect x="22" y="19" width="7" height="7" stroke="#1010d8" stroke-width="2" /></svg>
        </button>
      </div>
      <div class="flex-1 flex p-[2px] px-px pb-0 bg-[#9cdada] border-t border-black">
        <button class="flex-1 leading-[18px] border-2 [border-color:#cbf1f1_#548083_#548083_#cbf1f1]">Close</button>
      </div>
    </div>
  </section>

  <!-- Results viewer -->
  <section class="absolute left-[59px] top-[173px] w-[502px] h-[541px] flex flex-col bg-[#d4d0c8] border-2 [border-color:#f0eee8_#55524e_#55524e_#f0eee8] p-[2px]">
    <div class="h-[18px] shrink-0 flex items-center gap-[2px] px-[2px] bg-linear-to-r from-[#808080] to-[#c0c0c0] text-[#d4d0c8] text-[11px] font-['DejaVu_Sans_Condensed','DejaVu_Sans',sans-serif]">
      <svg class="w-4 h-[14px]"><use href="#xwin" /></svg>
      <h2 class="flex-1">Results viewer</h2>
      <button aria-label="Close" class="w-4 h-[14px] bg-[#d4d0c8] border [border-color:#fff_#404040_#404040_#fff]"><svg viewBox="0 0 14 12" class="block"><use href="#close" /></svg></button>
    </div>
    <div class="mt-px flex-1 min-h-0 flex flex-col bg-[#52ceb0] border border-b-0 border-black">
      <div class="h-[29px] shrink-0 p-px pt-[2px] bg-[#9cdada] border-b-2 border-black">
        <button class="block w-full h-6 leading-[20px] bg-[#52ceb0] border-2 [border-color:#a2ead8_#2b7362_#2b7362_#a2ead8] text-[15px] font-['Liberation_Serif',serif]">Signal Layer Checks</button>
      </div>
      <div class="flex-1 min-h-0 flex">
        <!-- Layers column -->
        <div class="w-[171px] shrink-0 flex flex-col border-r-3 border-black">
          <div class="h-[30px] flex italic border-b border-black">
            <div class="w-[51px] p-px pt-[2px] border-r-2 border-black"><button class="w-full h-[25px] leading-[20px] font-normal italic bg-[#9cdada] border-2 [border-color:#cbf1f1_#548083_#548083_#cbf1f1]">None</button></div>
            <div class="flex-1 text-center leading-[28px] bg-[#9cdada]">Layers</div>
            <div class="w-[41px] p-px pt-[2px] border-l-2 border-black"><button class="w-full h-[25px] leading-[20px] font-normal italic bg-[#9cdada] border-2 [border-color:#cbf1f1_#548083_#548083_#cbf1f1]">All</button></div>
          </div>
          <div class="flex-1 flex gap-1">
            <ul class="flex-1 pl-[3px] pr-[4px] pt-[3px] border-2 [border-color:#2b7362_#a2ead8_#a2ead8_#2b7362]">
              <li class="h-[15px] mb-[3px] leading-[15px] bg-black text-[#52ceb0]">cs</li>
              <li class="h-[15px] leading-[15px] bg-black text-[#52ceb0]">ss</li>
            </ul>
            <div class="w-[15px] flex flex-col bg-[#46ab93] border-l-2 border-[#2b7362] text-[#52ceb0]">
              <svg class="w-3 h-3 shrink-0"><use href="#up" /></svg>
              <div class="flex-1 mr-[2px] bg-[#52ceb0] border-2 [border-color:#a2ead8_#2b7362_#2b7362_#a2ead8]"></div>
              <svg class="w-3 h-3 shrink-0"><use href="#down" /></svg>
            </div>
          </div>
          <div class="h-[14px] mt-1 mb-px mr-[19px] flex bg-[#46ab93] border-y-2 [border-color:#2b7362_#a2ead8_#a2ead8_#2b7362] text-[#52ceb0]">
            <svg class="w-3 h-[10px] shrink-0"><use href="#left" /></svg>
            <div class="flex-1 bg-[#52ceb0] border-2 [border-color:#a2ead8_#2b7362_#2b7362_#a2ead8]"></div>
            <svg class="w-3 h-[10px] shrink-0"><use href="#right" /></svg>
          </div>
          <div class="h-[33px] border-t border-black py-[2px] pl-[6px] pr-[2px]">
            <div class="relative h-[28px]">
              <select aria-label="Layer mode" class="appearance-none w-full h-full pl-[4px] bg-[#9cdada] border-2 [border-color:#cbf1f1_#548083_#548083_#cbf1f1]"><option>Replace layers</option></select>
              <span class="absolute right-[7px] top-[11px] w-3 h-[7px] border-2 pointer-events-none [border-color:#cbf1f1_#548083_#548083_#cbf1f1]"></span>
            </div>
          </div>
        </div>
        <!-- Categories column -->
        <div class="flex-1 min-w-0 flex flex-col">
          <div class="h-[30px] flex pl-px pr-px bg-[#9cdada]">
            <div class="w-[207px] pr-[2px] bg-[#52ceb0]"><button class="w-full h-[29px] italic bg-[#9cdada] border-2 [border-color:#cbf1f1_#548083_#548083_#cbf1f1]">Categories (6)</button></div>
            <label for="meas" class="flex-1 leading-[30px]">Meas:</label>
            <div class="relative w-[61px] h-[29px]">
              <select id="meas" class="appearance-none w-full h-full pl-[4px] bg-[#9cdada] border-2 [border-color:#cbf1f1_#548083_#548083_#cbf1f1]"><option>All</option></select>
              <span class="absolute right-[5px] top-[11px] w-3 h-[7px] border-2 pointer-events-none [border-color:#cbf1f1_#548083_#548083_#cbf1f1]"></span>
            </div>
          </div>
          <div class="flex-1 flex gap-1">
            <ul class="flex-1 pl-[3px] pr-[4px] pt-[3px] whitespace-nowrap border-2 [border-color:#2b7362_#a2ead8_#a2ead8_#2b7362]">
              <li class="h-[18px] leading-[18px]">PTH (Comp) Annular ring (172)</li>
              <li class="h-[15px] mt-px mb-[2px] leading-[15px] bg-black text-[#52ceb0]">VIA Annular ring (25)</li>
              <li class="h-[18px] leading-[18px]">Rout to Copper (103)</li>
              <li class="h-[18px] leading-[18px]">Pads (2350)</li>
              <li class="h-[18px] leading-[18px]">SMD Packages (3)</li>
              <li class="h-[18px] leading-[18px]">Pad to Cu Connection (1)</li>
            </ul>
            <div class="w-[15px] flex flex-col bg-[#46ab93] border-l-2 border-[#2b7362] text-[#52ceb0]">
              <svg class="w-3 h-3 shrink-0"><use href="#up" /></svg>
              <div class="flex-1 mr-[2px] bg-[#52ceb0] border-2 [border-color:#a2ead8_#2b7362_#2b7362_#a2ead8]"></div>
              <svg class="w-3 h-3 shrink-0"><use href="#down" /></svg>
            </div>
          </div>
          <div class="h-[14px] mt-1 mb-[2px] mr-[19px] flex bg-[#46ab93] border-y-2 [border-color:#2b7362_#a2ead8_#a2ead8_#2b7362] text-[#52ceb0]">
            <svg class="w-3 h-[10px] shrink-0"><use href="#left" /></svg>
            <div class="flex-1 bg-[#52ceb0] border-2 [border-color:#a2ead8_#2b7362_#2b7362_#a2ead8]"></div>
            <svg class="w-3 h-[10px] shrink-0"><use href="#right" /></svg>
          </div>
          <div class="h-[26px] flex gap-1 pl-[2px] pr-[2px]">
            <button class="w-[53px] h-6 leading-[20px] bg-[#9cdada] border-2 [border-color:#cbf1f1_#548083_#548083_#cbf1f1]">First</button>
            <button class="w-[44px] h-6 leading-[20px] bg-[#9cdada] border-2 [border-color:#cbf1f1_#548083_#548083_#cbf1f1]">&lt;---</button>
            <button class="w-[44px] h-6 leading-[20px] bg-[#9cdada] border-2 [border-color:#cbf1f1_#548083_#548083_#cbf1f1]">---&gt;</button>
            <button class="w-[44px] h-6 leading-[20px] bg-[#9cdada] border-2 [border-color:#cbf1f1_#548083_#548083_#cbf1f1]">Last</button>
            <label for="index" class="leading-[24px]">Index:</label>
            <input id="index" type="text" value="1821" class="flex-1 min-w-0 h-6 pl-[5px] pb-1 border-2 [border-color:#2b7362_#a2ead8_#a2ead8_#2b7362] bg-[linear-gradient(#000,#000)] bg-[length:1px_14px] bg-no-repeat bg-[position:3px_1px]" />
          </div>
          <div class="h-[33px] flex">
            <div class="w-[124px] shrink-0 py-[2px] pl-[6px] pr-[2px] border border-r-2 border-black">
              <div class="relative h-[28px]">
                <select aria-label="Zoom mode" class="appearance-none w-full h-full pl-[4px] bg-[#9cdada] border-2 [border-color:#cbf1f1_#548083_#548083_#cbf1f1]"><option>Auto Zoom</option></select>
                <span class="absolute right-[6px] top-[11px] w-3 h-[7px] border-2 pointer-events-none [border-color:#cbf1f1_#548083_#548083_#cbf1f1]"></span>
              </div>
            </div>
            <div class="w-[98px] shrink-0 flex border border-l-0 border-black bg-[#1be81b]">
              <label for="sv" class="w-[28px] leading-[31px] bg-[#9cdada]">Sv:</label>
              <div class="relative flex-1 py-[2px] pl-[6px] pr-[2px]">
                <select id="sv" class="appearance-none w-full h-[27px] bg-[#1be81b] border-2 [border-color:#80ff80_#189018_#189018_#80ff80]"><option></option></select>
                <span class="absolute right-[9px] top-[12px] w-3 h-[7px] border-2 pointer-events-none [border-color:#d0ffd0_#189018_#189018_#d0ffd0]"></span>
              </div>
            </div>
            <label class="flex items-center gap-[3px] pl-1 pb-[6px] whitespace-nowrap"><input type="checkbox" class="appearance-none w-[13px] h-[13px] border [border-color:#a2ead8_#2b7362_#2b7362_#a2ead8]" />Show All</label>
          </div>
          <div class="h-[34px] flex items-center justify-end gap-1 pr-[2px]">
            <button aria-label="Delete" class="w-[30px] h-[30px] flex items-center justify-center bg-[#9cdada] border-2 [border-color:#cbf1f1_#548083_#548083_#cbf1f1]"><svg class="w-6 h-6 shrink-0"><use href="#del" /></svg></button>
            <button aria-label="Reference" class="w-[30px] h-[30px] flex items-center justify-center bg-[#9cdada] border-2 [border-color:#cbf1f1_#548083_#548083_#cbf1f1]"><svg class="w-6 h-6 shrink-0"><use href="#ref" /></svg></button>
            <button aria-label="Undo" class="w-[34px] h-[30px] flex items-center justify-center bg-[#9cdada] border-2 [border-color:#cbf1f1_#548083_#548083_#cbf1f1]">
              <svg viewBox="0 0 28 24" class="w-[28px] h-6 shrink-0"><rect x="2.500" y="1.500" width="23" height="21" fill="none" stroke="#000" /><text x="14" y="10" text-anchor="middle" font-family="Liberation Serif" font-size="9" font-weight="400">UNDO</text><path d="M9.500 12.500l4-2v1.500c5 0 6 8 0 9.500l-1-2c3-1 3-4 1-4.500v1.500z" fill="#f0f030" stroke="#000" stroke-width=".9" /></svg>
            </button>
          </div>
        </div>
      </div>
      <div class="h-[22px] shrink-0 leading-[19px] text-center border-y-2 border-black whitespace-pre">cs 5.01mil  r13.78  r23.8</div>
      <div class="h-[21px] shrink-0 leading-[21px] pl-[2px] bg-[#ffffcc] border-b border-black">ERF--&gt; via_ar = 4 7 9</div>
      <div class="h-[33px] shrink-0 flex items-center gap-1 pl-[2px] bg-[#9cdada]">
        <button class="flex-1 h-[30px] border-2 [border-color:#cbf1f1_#548083_#548083_#cbf1f1]">Close</button>
        <button aria-label="Compare" class="w-[30px] h-[30px] p-px border-2 [border-color:#cbf1f1_#548083_#548083_#cbf1f1]">
          <svg viewBox="0 0 22 22" class="w-6 h-6"><rect width="22" height="22" /><rect x="1" y="1" width="8" height="15" fill="#9cdada" /><path d="M13 1h8v15h-5l-1-2h-2l-1-3 2-2z" fill="#ffff20" /><path d="M9 4v5l-2 4h4l1-4V4z" /><path d="M5.500 5v3M16.500 5v3" stroke="#000" /></svg>
        </button>
        <button aria-label="Record" class="w-[30px] h-[30px] p-px border-2 [border-color:#cbf1f1_#548083_#548083_#cbf1f1]">
          <svg viewBox="0 0 22 22" class="w-6 h-6"><rect x="1" y="1" width="20" height="20" fill="#9cdada" stroke="#000" /><rect x="3" y="3" width="16" height="13" /><circle cx="9" cy="11" r="3.500" fill="#f01414" /><path d="M11 12h4V5" fill="none" stroke="#f01414" stroke-width="2" /><path d="M5 18.500h12" stroke="#000" /></svg>
        </button>
        <button aria-label="No reference" class="w-[30px] h-[30px] p-px border-2 [border-color:#cbf1f1_#548083_#548083_#cbf1f1]">
          <svg viewBox="0 0 22 22" class="w-6 h-6"><rect x="1" y="1" width="20" height="20" fill="none" stroke="#000" /><text x="11" y="15" text-anchor="middle" font-family="Liberation Serif" font-size="10" font-weight="400">REF</text><path d="M3 3l16 16M19 3L3 19" stroke="#e01414" stroke-width="1.800" /></svg>
        </button>
        <button aria-label="Numbers" class="w-[30px] h-[30px] p-px border-2 [border-color:#cbf1f1_#548083_#548083_#cbf1f1]">
          <svg viewBox="0 0 22 22" class="w-6 h-6"><rect x="1" y="1" width="20" height="20" fill="none" stroke="#000" /><path d="M3.500 3.500h15v11l-4 4h-11z" fill="#1be81b" stroke="#000" /><path d="M18.500 14.500h-4v4" fill="#fff" stroke="#000" /><text x="10.500" y="13" text-anchor="middle" font-family="Liberation Sans" font-size="10" font-weight="700">12</text></svg>
        </button>
        <button aria-label="Report" class="w-[30px] h-[30px] p-px border-2 [border-color:#cbf1f1_#548083_#548083_#cbf1f1]">
          <svg viewBox="0 0 22 22" class="w-6 h-6"><rect x="1" y="1" width="20" height="20" fill="none" stroke="#000" /><path d="M3.500 3.500h14v11l-4 4h-10z" fill="#ffff20" stroke="#000" /><path d="M17.500 14.500h-4v4" fill="#fff" stroke="#000" /><path d="M6 6.500h9M6 8.500h6M6 10.500h9M6 12.500h7M6 15.500h5" stroke="#000" /></svg>
        </button>
        <button aria-label="Histogram" class="w-[30px] h-[30px] border-3 border-[#d01818]">
          <svg viewBox="0 0 22 22" class="w-6 h-6"><rect x="1" y="1" width="20" height="20" fill="#9cdada" stroke="#000" /><g stroke="#000" stroke-width=".6"><rect x="4" y="10" width="2.500" height="9" fill="#f01414" /><rect x="7" y="6" width="2.500" height="13" fill="#1be81b" /><rect x="10" y="12" width="2.500" height="7" fill="#2020f0" /><rect x="13" y="3" width="2.500" height="16" fill="#b040f0" /><rect x="16" y="10" width="2.500" height="9" fill="#30e8f0" /></g><path d="M2 19.500h18" stroke="#000" /></svg>
        </button>
      </div>
    </div>
  </section>

</body>
</html>
